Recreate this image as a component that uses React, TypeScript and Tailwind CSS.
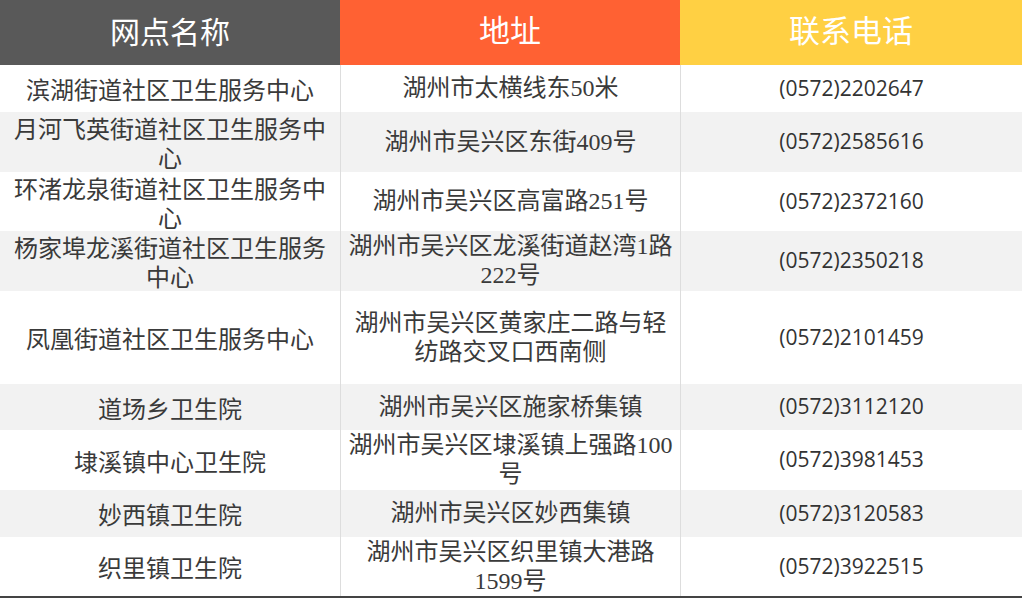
import React from "react";

type Row = { name: string[]; addr: string[]; phone: string; h: number };

const rows: Row[] = [
  { name: ["滨湖街道社区卫生服务中心"], addr: ["湖州市太横线东50米"], phone: "(0572)2202647", h: 47 },
  { name: ["月河飞英街道社区卫生服务中", "心"], addr: ["湖州市吴兴区东街409号"], phone: "(0572)2585616", h: 60 },
  { name: ["环渚龙泉街道社区卫生服务中", "心"], addr: ["湖州市吴兴区高富路251号"], phone: "(0572)2372160", h: 59 },
  { name: ["杨家埠龙溪街道社区卫生服务", "中心"], addr: ["湖州市吴兴区龙溪街道赵湾1路", "222号"], phone: "(0572)2350218", h: 60 },
  { name: ["凤凰街道社区卫生服务中心"], addr: ["湖州市吴兴区黄家庄二路与轻", "纺路交叉口西南侧"], phone: "(0572)2101459", h: 93 },
  { name: ["道场乡卫生院"], addr: ["湖州市吴兴区施家桥集镇"], phone: "(0572)3112120", h: 46 },
  { name: ["埭溪镇中心卫生院"], addr: ["湖州市吴兴区埭溪镇上强路100", "号"], phone: "(0572)3981453", h: 60 },
  { name: ["妙西镇卫生院"], addr: ["湖州市吴兴区妙西集镇"], phone: "(0572)3120583", h: 47 },
  { name: ["织里镇卫生院"], addr: ["湖州市吴兴区织里镇大港路", "1599号"], phone: "(0572)3922515", h: 59 },
];

const sans = "font-['Noto_Sans_CJK_SC',sans-serif]";
const serif = "font-['Liberation_Serif','Noto_Sans_CJK_SC',serif]";

export default function App() {
  return (
    <div className="w-[1022px] h-[598px] bg-white overflow-hidden">
      <div className="grid grid-cols-[340px_340px_342px] h-[65px] text-white">
        <div className={`bg-[#595959] flex items-center justify-center text-[30px] ${serif}`}>网点名称</div>
        <div className={`bg-[#ff6133] flex items-center justify-center text-[31px] ${serif}`}>地址</div>
        <div className={`bg-[#ffd043] flex items-center justify-center text-[31px] ${serif}`}>联系电话</div>
      </div>
      {rows.map((r, i) => (
        <div
          key={i}
          className={`grid grid-cols-[340px_340px_342px] text-[#3a3a3a] ${i % 2 === 1 ? "bg-[#f2f2f2]" : "bg-white"}`}
          style={{ height: r.h }}
        >
          <div className={`flex flex-col items-center justify-center text-center text-[24px] leading-[29px] ${sans}`}>
            {r.name.map((l, j) => (
              <span key={j} className="whitespace-nowrap">{l}</span>
            ))}
          </div>
          <div className={`border-l border-[#dddddd] flex flex-col items-center justify-center text-center text-[24px] leading-[29px] ${serif}`}>
            {r.addr.map((l, j) => (
              <span key={j} className="whitespace-nowrap">{l}</span>
            ))}
          </div>
          <div className="border-l border-[#dddddd] flex items-center justify-center text-[21px] font-['Open_Sans',sans-serif] text-[#333333]">
            {r.phone}
          </div>
        </div>
      ))}
      <div className="h-[2px] bg-[#444444]" />
    </div>
  );
}
